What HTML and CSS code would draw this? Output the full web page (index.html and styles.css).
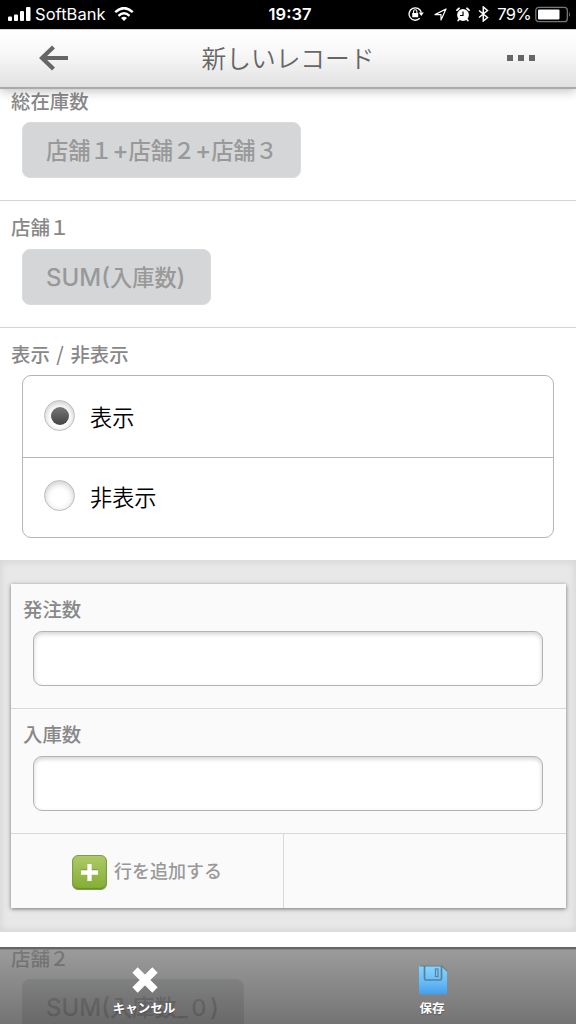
FILE: index.html
```html
<!DOCTYPE html>
<html lang="ja">
<head>
<meta charset="utf-8">
<title>新しいレコード</title>
<link rel="stylesheet" href="styles.css">
</head>
<body>
<div class="screen">
  <div class="status">
    <div class="status-left">
      <svg width="24" height="15" viewBox="0 0 24 15" fill="#fff"><rect x="0" y="9.500" width="4" height="4.500" rx="1"/><rect x="6" y="7.500" width="4" height="6.500" rx="1"/><rect x="12" y="4" width="4" height="10" rx="1"/><rect x="18" y="0" width="4.500" height="14" rx="1"/></svg>
      <span class="carrier">SoftBank</span>
      <svg class="wifi" width="20" height="15" viewBox="0 0 20 15"><g fill="none" stroke="#fff" stroke-width="2.500"><path d="M1.200 5.200Q10-3 18.800 5.200"/><path d="M4.500 8.800Q10 3.700 15.500 8.800"/></g><path d="M7 11q3-2.600 6 0l-3 3z" fill="#fff"/></svg>
    </div>
    <span class="clock">19:37</span>
    <div class="status-right">
      <svg width="16" height="16" viewBox="0 0 16 16"><path d="M11.800 12.300A6.200 6.200 0 1 1 13.300 6.500" fill="none" stroke="#fff" stroke-width="1.300"/><path d="M10.800 6.500h5l-2.500 3.500z" fill="#fff"/><rect x="4.200" y="7" width="6" height="4.300" rx=".5" fill="#fff"/><path d="M5.500 7V5.500a1.700 1.700 0 0 1 3.400 0V7" fill="none" stroke="#fff" stroke-width="1.100"/></svg>
      <svg class="locate" width="13" height="13" viewBox="0 0 13 13"><path d="M1 6.600L12 1 7 12V6.600z" fill="none" stroke="#fff" stroke-width="1.200" stroke-linejoin="round"/></svg>
      <svg class="alarm" width="14" height="15" viewBox="0 0 14 15"><circle cx="7" cy="8" r="5.900" fill="#fff"/><path d="M1 3.200L3 1.300M13 3.200L11 1.300M3 12.500l-.8 1M11 12.500l.8 1" stroke="#fff" stroke-width="1.800" stroke-linecap="round"/><path d="M7 4.500V8.500H4" fill="none" stroke="#000" stroke-width="1.200"/></svg>
      <svg class="bluetooth" width="11" height="16" viewBox="0 0 11 16"><path d="M1 4.500l8.500 7L5.300 15V1l4.200 3.500-8.500 7" fill="none" stroke="#fff" stroke-width="1.500"/></svg>
      <span class="percent">79%</span>
      <svg width="37" height="17" viewBox="0 0 37 17"><rect x=".8" y="1.300" width="31.500" height="14.400" rx="3" fill="none" stroke="#777" stroke-width="1.300"/><rect x="3" y="3.500" width="21.500" height="10" rx="1" fill="#fff"/><path d="M34 6q2 2.500 0 5z" fill="#777"/></svg>
    </div>
  </div>

  <header class="header">
    <svg class="back" width="30" height="28" viewBox="0 0 30 28"><path d="M14.500 3L3 14l11.500 11M4 14h25" fill="none" stroke="#666" stroke-width="4.200"/></svg>
    <h1 class="title">新しいレコード</h1>
    <div class="more"><i></i><i></i><i></i></div>
  </header>

  <main class="content">
    <section class="field field-first">
      <div class="label">総在庫数</div>
      <div class="calc calc-total">店舗１<b>+</b>店舗２<b>+</b>店舗３</div>
    </section>
    <section class="field">
      <div class="label">店舗１</div>
      <div class="calc calc-one"><b>SUM(</b>入庫数<b>)</b></div>
    </section>
    <section class="field field-radio">
      <div class="label label-slash">表示 / 非表示</div>
      <div class="radios">
        <div class="option"><span class="radio checked"></span>表示</div>
        <div class="option"><span class="radio"></span>非表示</div>
      </div>
    </section>
    <section class="table-zone">
      <div class="card">
        <div class="cell"><div class="label">発注数</div><div class="input"></div></div>
        <div class="cell"><div class="label">入庫数</div><div class="input"></div></div>
        <div class="actions">
          <div class="add">
            <span class="plus"><svg width="17" height="17" viewBox="0 0 17 17"><path d="M8.500 0v17M0 8.500h17" stroke="#587c20" stroke-width="4.600" transform="translate(0 -1)" opacity=".5"/><path d="M8.500 0v17M0 8.500h17" stroke="#fff" stroke-width="4.400"/></svg></span>
            <span class="add-text">行を追加する</span>
          </div>
          <div class="empty"></div>
        </div>
      </div>
    </section>
    <section class="field field-last">
      <div class="label">店舗２</div>
      <div class="calc calc-two"><b>SUM(</b>入庫数<b>_</b>０<b>)</b></div>
    </section>
  </main>

  <footer class="toolbar">
    <div class="tool">
      <svg width="26" height="26" viewBox="0 0 26 26"><path d="M3 3l20 20M23 3L3 23" stroke="#fff" stroke-width="7.500"/></svg>
      <span>キャンセル</span>
    </div>
    <div class="tool">
      <svg width="30" height="30" viewBox="0 0 30 30">
        <defs><linearGradient id="disk" x2="0" y2="1"><stop offset="0" stop-color="#86d5ff"/><stop offset=".55" stop-color="#65bdf8"/><stop offset="1" stop-color="#459eeb"/></linearGradient></defs>
        <path d="M2 1h22l5 5v22q0 1.500-1.500 1.500h-25Q1 29.500 1 28V2q0-1 1-1z" fill="url(#disk)"/>
        <path d="M2 1h22l5 5" fill="none" stroke="#687e8b" stroke-width="1.200"/>
        <path d="M6.500 1v12.500q0 1.500 1.500 1.500h14q1.500 0 1.500-1.500V1" fill="none" stroke="#5c7f98" stroke-width="1.700"/>
        <rect x="17.500" y="4" width="2.500" height="7.500" fill="#81cefa" stroke="#5c7f98" stroke-width="1.200"/>
      </svg>
      <span>保存</span>
    </div>
  </footer>
</div>
</body>
</html>
```

FILE: styles.css
```css
* { box-sizing: border-box; }
body { margin: 0; background: #fff; font-family: "Noto Sans CJK JP", sans-serif; }
svg { display: block; flex: none; }
.screen { position: relative; width: 576px; height: 1024px; overflow: hidden; display: flex; flex-direction: column; }

.status { flex: none; height: 29px; background: #000; color: #fff; display: grid; grid-template-columns: 1fr auto 1fr; align-items: center; padding: 0 5px 1px 8px; font: 17px/28px Inter, sans-serif; }
.status-left, .status-right { display: flex; align-items: center; }
.carrier { margin-left: 3px; font-size: 16.500px; letter-spacing: .05px; }
.wifi { margin-left: 8px; }
.clock { font-weight: 600; font-size: 16.500px; margin-left: 1px; }
.status-right { justify-content: flex-end; }
.locate { margin-left: 10px; }
.alarm { margin-left: 9px; }
.bluetooth { margin-left: 8px; }
.percent { margin: 0 4px 0 8px; font-size: 16.500px; letter-spacing: -.6px; }
.status-right svg:last-child { margin-right: -1px; }

.header { position: relative; z-index: 1; flex: none; height: 60px; padding: 0 41px 0 39px; display: flex; align-items: center; justify-content: space-between; background: linear-gradient(#fff, #f8f8f8 40%, #e1e1e1); border-top: 1px solid #d4d4d4; border-bottom: 2px solid #aaa; box-shadow: 0 2px 10px rgba(0, 0, 0, .25); }
.title { margin: -4px 0 0; font-size: 24.700px; line-height: 58px; font-weight: 350; color: #666; }
.more { display: flex; gap: 5px; }
.more i { width: 6px; height: 6px; background: #666; }
.back, .more { margin-top: -1px; }

.content { flex: none; }
.field { border-bottom: 1px solid #d5d5d5; height: 126.500px; padding: 11px 22px 0; background: #fff; }
.field-first { height: 112px; padding-top: 0; }
.field-radio { height: 232.500px; border-bottom: 0; }
.label { margin-left: -11px; height: 30px; line-height: 30px; font-size: 19.400px; font-weight: 500; color: #888; white-space: pre; }
.field > .label { margin-bottom: 7px; }
.field-first > .label { height: 24px; line-height: 24px; margin-bottom: 9px; }
.label-slash { word-spacing: 2.200px; }
.calc { height: 56px; line-height: 53px; padding-left: 23px; border-radius: 8px; background: #d5d6d8; border: 1px solid #dadbdc; color: #999; font-size: 22.200px; font-weight: 500; white-space: nowrap; }
.calc b { font-family: Inter, sans-serif; font-weight: 500; font-size: 24px; }
.calc-total { width: 279px; }
.calc-one { width: 189px; }
.calc-two { width: 222px; }

.field-radio > .label { margin-bottom: 6.500px; }
.radios { height: 163px; border: 1.500px solid #b5b5b5; border-radius: 9px; display: grid; grid-template-rows: 1fr 1fr; }
.option { display: flex; align-items: center; gap: 15px; padding: 0 0 1px 21px; font-size: 22.200px; line-height: 32px; font-weight: 350; color: #000; }
.option + .option { border-top: 1px solid #b5b5b5; padding-bottom: 3px; }
.radio { width: 31px; height: 31px; border: 1px solid #bbb; border-radius: 50%; background: #fff; box-shadow: inset 0 2px 6px rgba(0, 0, 0, .22); display: grid; place-items: center; }
.checked::after { content: ""; width: 18px; height: 18px; border-radius: 50%; background: linear-gradient(#777, #444); }

.table-zone { height: 372px; padding: 23px 10px 0 11px; background: #e8e8e8; border: solid #dcdcdc; border-width: 1px 0; box-shadow: inset 0 0 8px rgba(0, 0, 0, .1); }
.card { height: 324px; background: #fafafa; box-shadow: 0 1px 4px rgba(0, 0, 0, .5); }
.cell { height: 125px; padding: 10px 23px 0 22px; border-bottom: 1px solid #d8d8d8; }
.cell .label { margin-bottom: 7px; margin-left: -10px; }
.input { height: 55px; border: 1.500px solid #b3b3b3; border-radius: 9px; background: #fff; box-shadow: inset 0 2px 4px rgba(0, 0, 0, .18); }
.actions { height: 74px; display: grid; grid-template-columns: 273px 1fr; }
.add { display: flex; align-items: center; gap: 7px; padding-left: 61px; border-right: 1px solid #d8d8d8; }
.plus { width: 35px; height: 35px; margin-top: 2px; border: 1px solid #7f9e42; border-radius: 6px; background: linear-gradient(#adc968, #83ad34); box-shadow: inset 0 -1px 1px #688d27; display: grid; place-items: center; }
.plus svg { margin-top: 1px; }
.add-text { font-size: 18px; line-height: 30px; font-weight: 500; color: #999; margin-top: -3px; }
.field-last { height: 120px; }
.field-last > .label { margin-bottom: 6px; }

.toolbar { position: absolute; z-index: 2; left: 0; bottom: 0; width: 576px; height: 77px; display: grid; grid-template-columns: 1fr 1fr; background: linear-gradient(rgba(117, 117, 117, .72), rgba(62, 62, 62, .72)); border-top: 2px solid #666; box-shadow: inset 0 1px #888; }
.tool { display: flex; flex-direction: column; align-items: center; justify-content: flex-end; color: #fff; font-size: 12.500px; font-weight: 700; }
.tool span { line-height: 18px; margin: 3px 0 7px; text-shadow: 0 1px 1px rgba(0, 0, 0, .3); }
.tool svg { position: relative; top: -1px; left: .5px; }
.tool:first-child svg { margin-bottom: 2px; }
```
